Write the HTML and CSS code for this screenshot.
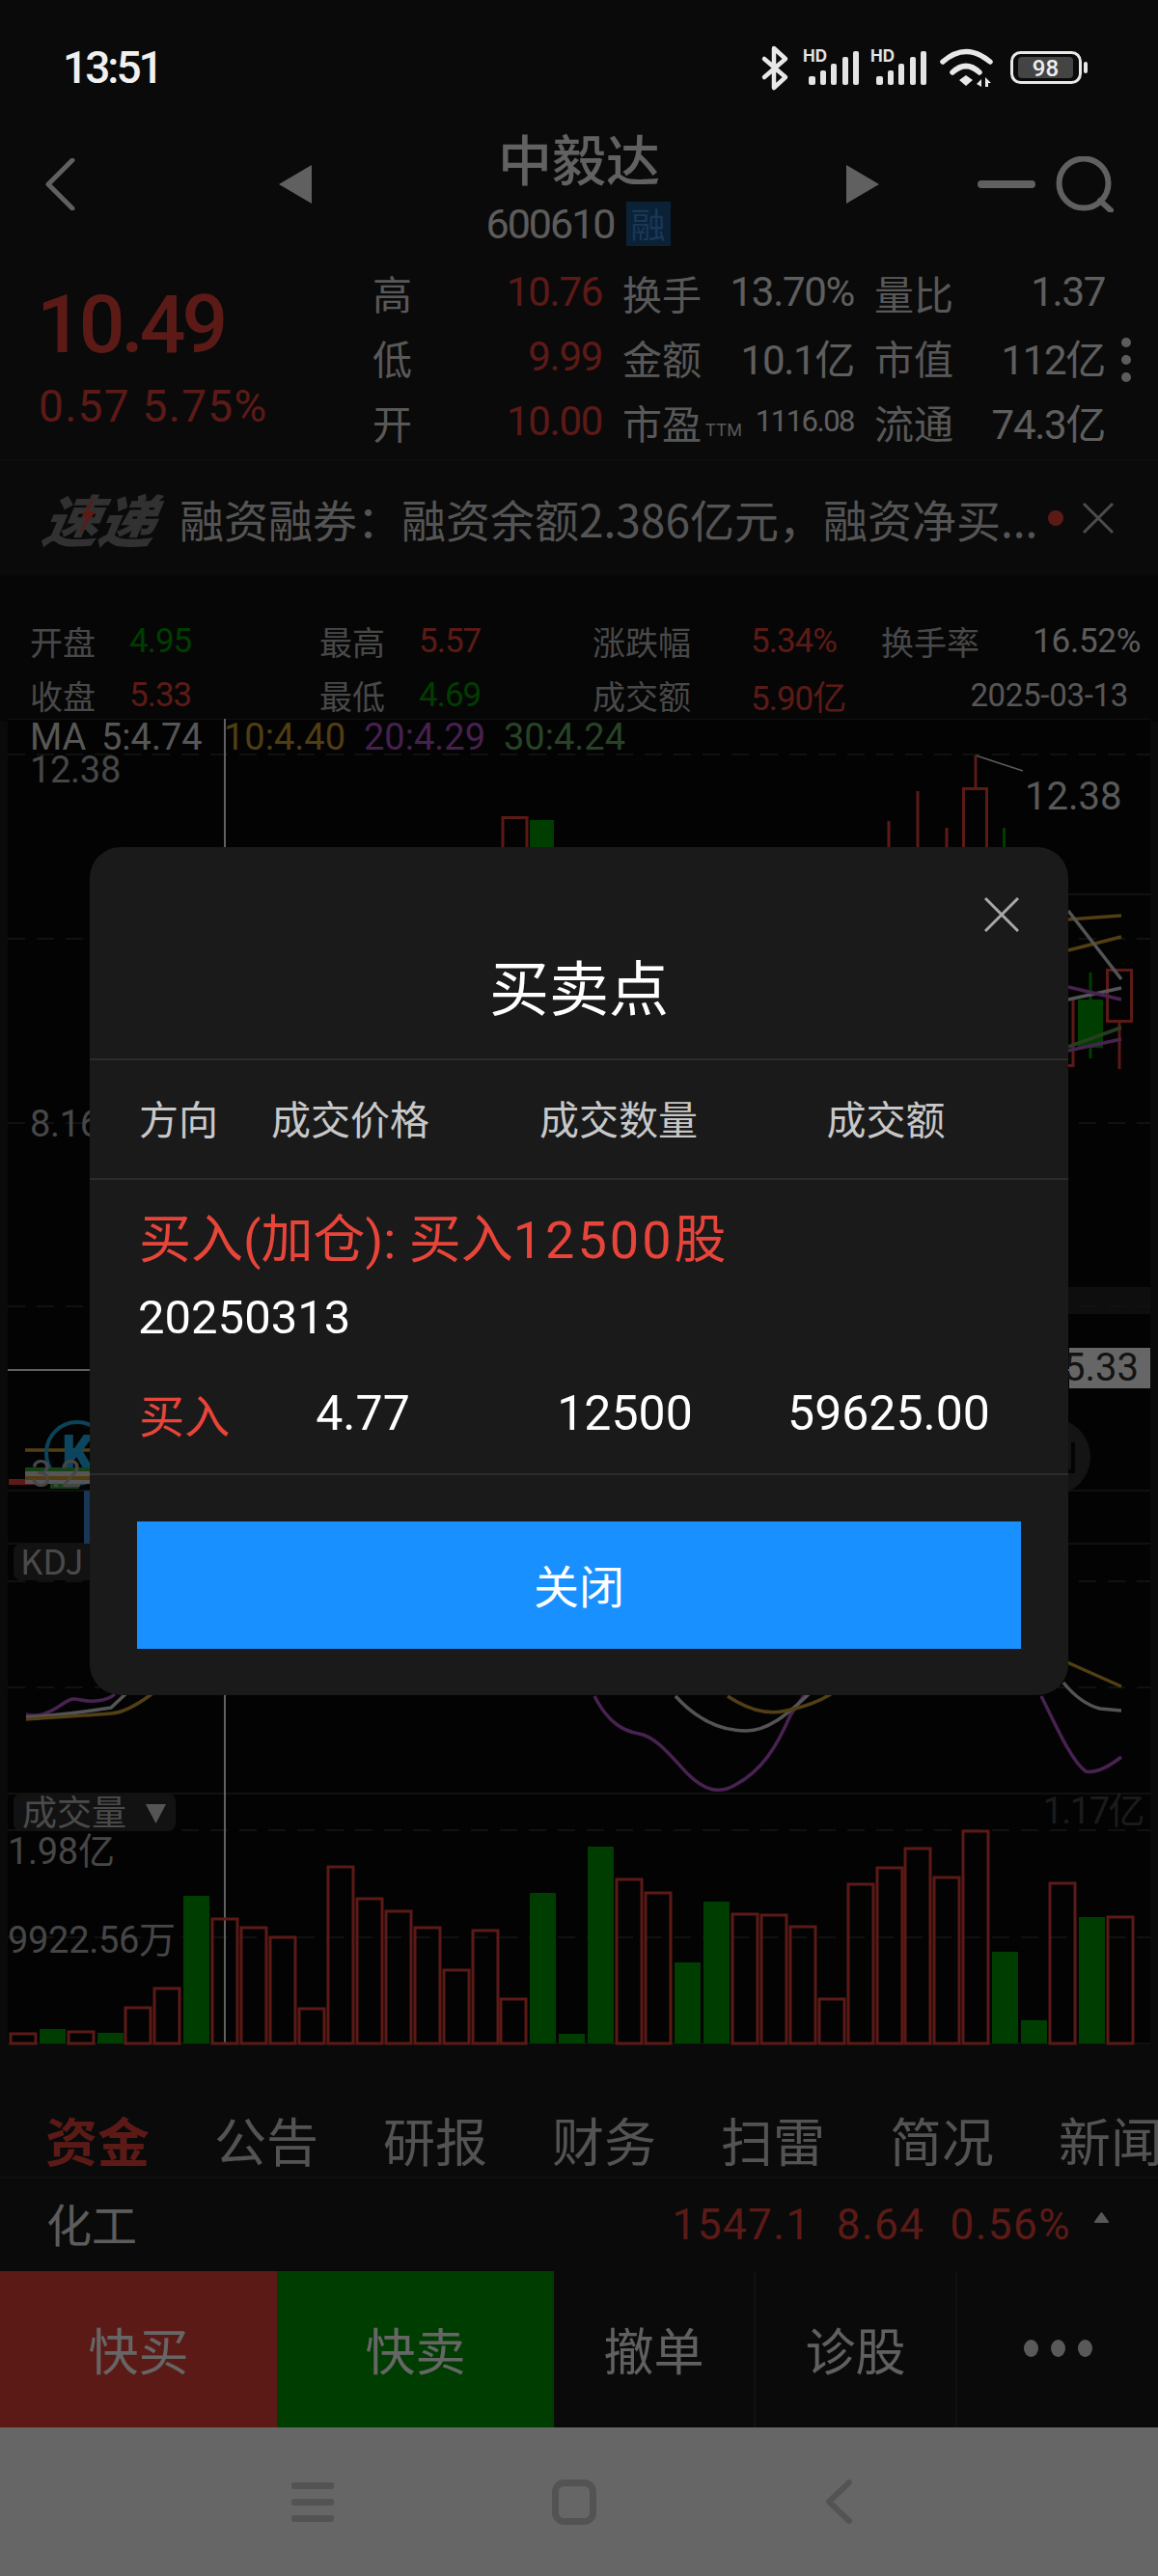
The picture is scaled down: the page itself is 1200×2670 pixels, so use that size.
FILE: index.html
```html
<!DOCTYPE html>
<html lang="zh-CN">
<head>
<meta charset="utf-8">
<title>中毅达 600610</title>
<link rel="stylesheet" href="styles.css">
</head>
<body>
<div class="page">
  <div class="status">
    <span class="clock">13:51</span>
    <div class="status-icons">
      <svg class="i-bt" viewBox="0 0 28 45"><path d="M3 13 25 32 13 43V2L25 13 3 32"/></svg>
      <svg class="i-sig" viewBox="0 0 58 36"><text class="sig-hd" x="0" y="12">HD</text><rect x="6" y="27" width="7" height="9" rx="2"/><rect x="18" y="21" width="6" height="15" rx="2"/><rect x="29" y="14" width="6" height="22" rx="2"/><rect x="41" y="7" width="6" height="29" rx="2"/><rect x="52" y="1" width="6" height="35" rx="2"/></svg>
      <svg class="i-sig" viewBox="0 0 58 36"><text class="sig-hd" x="0" y="12">HD</text><rect x="6" y="27" width="7" height="9" rx="2"/><rect x="18" y="21" width="6" height="15" rx="2"/><rect x="29" y="14" width="6" height="22" rx="2"/><rect x="41" y="7" width="6" height="29" rx="2"/><rect x="52" y="1" width="6" height="35" rx="2"/></svg>
      <svg class="i-wifi" viewBox="0 0 53 40"><path class="arc" d="M2 14Q26-7 51 14M12 25Q26 12 40 25"/><path class="fill" d="M19 33 26 28 33 33 26 39ZM37 37l5-5v8zM46 30l6 6h-3v4h-3z"/></svg>
      <svg class="i-bat" viewBox="0 0 80 34"><rect class="bat-box" x="1.5" y="1.5" width="71" height="31" rx="9"/><rect class="bat-fill" x="8" y="6" width="57" height="22" rx="4"/><text class="bat-num" x="36.5" y="26">98</text><rect class="bat-nub" x="76" y="11" width="4" height="12" rx="2"/></svg>
    </div>
  </div>

  <header class="head">
    <div class="head-side">
      <svg class="i-back" viewBox="0 0 32 54"><path d="M29 2 4 27 29 52"/></svg>
      <svg class="i-tri" viewBox="0 0 34 40"><path d="M34 0V40L0 20Z"/></svg>
    </div>
    <div class="head-mid">
      <div class="title">中毅达</div>
      <div class="sub"><span class="code">600610</span><span class="tag-rong">融</span></div>
    </div>
    <div class="head-side head-side-r">
      <svg class="i-tri" viewBox="0 0 34 40"><path d="M0 0V40L34 20Z"/></svg>
      <svg class="i-min" viewBox="0 0 60 8"><rect width="60" height="8" rx="4"/></svg>
      <svg class="i-search" viewBox="0 0 60 58"><circle cx="29" cy="28" r="25.5"/><path d="M46 46 57 56"/></svg>
    </div>
  </header>

  <section class="quote">
    <div class="price">
      <div class="price-now">10.49</div>
      <div class="price-chg">0.57 5.75%</div>
    </div>
    <div class="stats">
      <div class="stat"><span class="k">高</span><span class="v up">10.76</span></div>
      <div class="stat"><span class="k">换手</span><span class="v">13.70%</span></div>
      <div class="stat"><span class="k">量比</span><span class="v">1.37</span></div>
      <div class="stat"><span class="k">低</span><span class="v up">9.99</span></div>
      <div class="stat"><span class="k">金额</span><span class="v">10.1亿</span></div>
      <div class="stat"><span class="k">市值</span><span class="v">112亿</span></div>
      <div class="stat"><span class="k">开</span><span class="v up">10.00</span></div>
      <div class="stat"><span class="k">市盈<small class="ttm">TTM</small></span><span class="v v-sm">1116.08</span></div>
      <div class="stat"><span class="k">流通</span><span class="v">74.3亿</span></div>
    </div>
    <div class="kebab"><i></i><i></i><i></i></div>
  </section>

  <section class="news">
    <div class="news-logo">速递<svg class="bolt" viewBox="0 0 20 46"><path d="M14 0 4 25h6L3 46 18 18h-7z"/></svg></div>
    <div class="news-text">融资融券：融资余额2.386亿元，融资净买...</div>
    <i class="news-dot"></i>
    <svg class="news-x" viewBox="0 0 34 34"><path d="M2 2 32 32M32 2 2 32"/></svg>
  </section>

  <section class="info">
    <span class="ik">开盘</span><span class="iv dn">4.95</span>
    <span class="ik">最高</span><span class="iv up">5.57</span>
    <span class="ik">涨跌幅</span><span class="iv up">5.34%</span>
    <span class="i-last"><span class="ik">换手率</span><span class="iv">16.52%</span></span>
    <span class="ik">收盘</span><span class="iv up">5.33</span>
    <span class="ik">最低</span><span class="iv dn">4.69</span>
    <span class="ik">成交额</span><span class="iv up">5.90亿</span>
    <span class="i-date iv">2025-03-13</span>
  </section>

  <svg class="chart" viewBox="0 745 1200 1435" width="1200" height="1435">
    <rect class="c-bg" x="8" y="745" width="1184" height="1373"/>
    <rect class="c-band" x="1107" y="1334" width="85" height="28"/>
    <path class="c-line" d="M8 745H1192M1107 927H1192M8 1545H1192M8 1600H1192M8 1859H1192M8 2118H1192"/>
    <path class="c-dash" d="M8 782H1192M8 973H1192M8 1164H1192M8 1354H1192M8 1639H1192M8 1749H1192M8 1897H1192M8 2008H1192"/>
    <text class="c-ma c-w" x="31" y="777">MA</text>
    <text class="c-ma c-w" x="105" y="777">5:4.74</text>
    <text class="c-ma c-gold" x="232" y="777">10:4.40</text>
    <text class="c-ma c-pur" x="377" y="777">20:4.29</text>
    <text class="c-ma c-grn" x="522" y="777">30:4.24</text>
    <text class="c-ax" x="31" y="811">12.38</text>
    <text class="c-ax" x="31" y="1178">8.16</text>
    <text class="c-hi" x="1062" y="839">12.38</text>
    <path class="c-thin" d="M1011 783 1060 799"/>
    <path class="c-cross" d="M233 745V2118M8 1420H1192"/>

    <g class="c-candle">
      <path d="M521 880V847.500H546V880M921 851V880M951 820V880M981 858V880M1011 783V816M998.500 880V817.500H1022.500V880"/>
      <rect x="1147.500" y="1005.500" width="25" height="53"/>
      <path d="M1160 1059V1108M1112 1034V1104.500H1107"/>
    </g>
    <g class="c-solid">
      <rect x="549" y="850" width="25" height="30"/>
      <rect x="1039" y="858" width="3" height="22"/>
      <rect x="1117" y="1036" width="26" height="50"/>
      <rect x="1128.500" y="1008" width="3" height="89"/>
    </g>
    <path class="c-l c-s-gold" d="M1107 953 1162 949M1107 985 1162 971"/>
    <path class="c-l c-s-gray" d="M1107 944 1162 1015M1107 1036 1162 1024"/>
    <path class="c-l c-s-pur" d="M1107 1023 1162 1036M1107 1089 1162 1077"/>
    <path class="c-l c-s-grn" d="M1107 1085 1162 1065"/>

    <rect class="c-tag" x="1108" y="1397" width="84" height="42"/>
    <text class="c-tag-t" x="1180" y="1431">5.33</text>

    <circle class="c-round" cx="1090" cy="1510" r="40"/>
    <path class="c-round-a" d="M1112 1495V1525H1100"/>
    <path class="c-l c-s-gold" d="M26 1503H93"/>
    <circle class="c-k" cx="80" cy="1506" r="32"/>
    <text class="c-k-t" x="64" y="1524">K</text>
    <rect class="c-blk-r" x="9" y="1533" width="30" height="6"/>
    <rect class="c-blk-g" x="26" y="1521" width="67" height="4"/>
    <rect class="c-blk-w" x="26" y="1525" width="67" height="6"/>
    <rect class="c-blk-y" x="26" y="1530" width="67" height="4"/>
    <rect class="c-blk-w" x="26" y="1534" width="67" height="4"/>
    <rect class="c-blk-g" x="52" y="1538" width="30" height="5"/>
    <text class="c-ax" x="32" y="1541">3.2</text>
    <rect class="c-blue" x="87" y="1545" width="6" height="55"/>
    <rect class="c-lab" x="14" y="1600" width="90" height="38" rx="8"/>
    <text class="c-lab-t" x="21" y="1632">KDJ</text>

    <path class="c-c c-s-pur" d="M27 1777C40 1780 50 1776 62 1768S75 1760 84 1762 110 1764 119 1756M616 1758C630 1785 645 1794 662 1797 680 1800 695 1820 712 1838 730 1856 745 1860 762 1850 790 1835 805 1810 819 1778L834 1756M1079 1758C1095 1790 1110 1825 1125 1836 1135 1838 1148 1832 1162 1821"/>
    <path class="c-c c-s-gray" d="M27 1780C60 1778 90 1774 115 1770L130 1756M700 1758C720 1780 745 1794 773 1794 795 1794 815 1778 838 1756M1102 1744C1115 1760 1128 1768 1140 1771L1162 1773"/>
    <path class="c-c c-s-gold" d="M27 1782C55 1780 90 1778 115 1776 130 1775 145 1765 157 1756M754 1758C775 1772 795 1778 815 1773 830 1770 848 1764 861 1756M1106 1723 1162 1748"/>

    <rect class="c-lab" x="14" y="1859" width="168" height="39" rx="8"/>
    <text class="c-lab-t" x="23" y="1892">成交量</text>
    <path class="c-lab-a" d="M151 1870H172L161.500 1890Z"/>
    <text class="c-dim" x="1185" y="1890">1.17亿</text>
    <text class="c-ax" x="8" y="1932">1.98亿</text>
    <text class="c-ax" x="8" y="2024">9922.56万</text>

    <g class="c-candle">
      <rect x="11" y="2108" width="26" height="10"/><rect x="71" y="2106" width="26" height="12"/>
      <rect x="130" y="2081" width="26" height="37"/><rect x="160" y="2061" width="26" height="57"/>
      <rect x="220" y="1989" width="26" height="129"/><rect x="250" y="1998" width="26" height="120"/>
      <rect x="280" y="2008" width="26" height="110"/><rect x="310" y="2082" width="26" height="36"/>
      <rect x="340" y="1935" width="26" height="183"/><rect x="370" y="1968" width="26" height="150"/>
      <rect x="400" y="1981" width="26" height="137"/><rect x="430" y="1998" width="26" height="120"/>
      <rect x="460" y="2042" width="26" height="76"/><rect x="490" y="2001" width="26" height="117"/>
      <rect x="519" y="2072" width="26" height="46"/><rect x="639" y="1948" width="26" height="170"/>
      <rect x="669" y="1962" width="26" height="156"/><rect x="759" y="1984" width="26" height="134"/>
      <rect x="789" y="1985" width="26" height="133"/><rect x="819" y="1997" width="26" height="121"/>
      <rect x="849" y="2072" width="26" height="46"/><rect x="879" y="1953" width="26" height="165"/>
      <rect x="909" y="1936" width="26" height="182"/><rect x="938" y="1916" width="26" height="202"/>
      <rect x="968" y="1946" width="26" height="172"/><rect x="998" y="1898" width="26" height="220"/>
      <rect x="1088" y="1952" width="26" height="166"/><rect x="1148" y="1987" width="26" height="131"/>
    </g>
    <g class="c-solid">
      <rect x="41" y="2103" width="27" height="15"/><rect x="101" y="2107" width="27" height="11"/>
      <rect x="190" y="1965" width="27" height="153"/><rect x="549" y="1962" width="27" height="156"/>
      <rect x="579" y="2108" width="27" height="10"/><rect x="609" y="1914" width="27" height="204"/>
      <rect x="699" y="2034" width="27" height="84"/><rect x="729" y="1971" width="27" height="147"/>
      <rect x="1028" y="2023" width="27" height="95"/><rect x="1058" y="2094" width="27" height="24"/>
      <rect x="1118" y="1987" width="27" height="131"/>
    </g>
  </svg>

  <nav class="tabs">
    <span class="tab tab-on">资金</span><span class="tab">公告</span><span class="tab">研报</span><span class="tab">财务</span><span class="tab">扫雷</span><span class="tab">简况</span><span class="tab">新闻</span>
  </nav>

  <div class="sector">
    <span class="sector-name">化工</span>
    <span class="sector-val">1547.1</span><span class="sector-val">8.64</span><span class="sector-val">0.56%</span>
    <svg class="sector-tri" viewBox="0 0 17 12"><path d="M8.500 1 15 10H2Z"/></svg>
  </div>

  <div class="actions">
    <div class="act act-buy">快买</div>
    <div class="act act-sell">快卖</div>
    <div class="act act-sm">撤单</div>
    <div class="act act-sm">诊股</div>
    <div class="act act-more"><i></i><i></i><i></i></div>
  </div>

  <div class="navbar">
    <svg class="n-menu" viewBox="0 0 44 41"><path d="M3 3.500H41M3 20.500H41M3 37.500H41"/></svg>
    <svg class="n-home" viewBox="0 0 46 47"><rect x="3.500" y="3.500" width="39" height="40" rx="9"/></svg>
    <svg class="n-back" viewBox="0 0 28 46"><path d="M25 3 4 23 25 43"/></svg>
  </div>

  <div class="scrim">
    <div class="modal">
      <svg class="modal-x" viewBox="0 0 36 36"><path d="M1 1 35 35M35 1 1 35"/></svg>
      <h2 class="modal-title">买卖点</h2>
      <div class="m-row m-head"><span class="m-first">方向</span><span>成交价格</span><span>成交数量</span><span>成交额</span></div>
      <div class="m-body">
        <div class="m-sig">买入(加仓): 买入<span class="m-qty">12500</span>股</div>
        <div class="m-date">20250313</div>
        <div class="m-row m-vals"><span class="m-first m-red">买入</span><span>4.77</span><span>12500</span><span>59625.00</span></div>
      </div>
      <div class="m-foot"><button class="m-btn" type="button">关闭</button></div>
    </div>
  </div>
</div>
</body>
</html>
```

FILE: styles.css
```css
* { box-sizing: border-box; }
html, body { margin: 0; padding: 0; background: #191919; }
body { font-family: Roboto, "Noto Sans CJK SC", sans-serif; }
.page {
  --din: Roboto, "Noto Sans CJK SC", sans-serif;
  --up: #e6423a;
  --dn: #009a00;
  position: relative;
  width: 1200px;
  height: 2670px;
  display: flex;
  flex-direction: column;
  overflow: hidden;
  color: #e6e6e6;
  background: #191919;
  font-family: "Noto Sans CJK SC", sans-serif;
}

/* status bar sits above the scrim */
.status {
  position: relative;
  z-index: 3;
  flex: 0 0 120px;
  padding: 20px 73px 0 65px;
  display: flex;
  align-items: center;
  justify-content: space-between;
  background: #0a0a0a;
}
.clock { font: 500 46px Roboto, sans-serif; color: #f0f0f0; letter-spacing: -3px; }
.status-icons { display: flex; align-items: center; gap: 12px; }
.status-icons svg { display: block; overflow: visible; }
.i-bt { width: 28px; height: 45px; fill: none; stroke: #e8e8e8; stroke-width: 4.5; stroke-linejoin: round; stroke-linecap: round; }
.i-sig { width: 58px; height: 36px; fill: #e4e4e4; margin-left: 0; }
.i-bt + .i-sig { margin-left: 3px; }
.sig-hd { font: 700 17px Inter, sans-serif; fill: #e4e4e4; }
.i-wifi { width: 53px; height: 40px; margin-left: 3px; }
.i-wifi .arc { fill: none; stroke: #e8e8e8; stroke-width: 5.5; stroke-linecap: round; }
.i-wifi .fill { fill: #e8e8e8; }
.i-bat { width: 80px; height: 34px; margin-left: 7px; }
.bat-box { fill: none; stroke: #e8e8e8; stroke-width: 3; }
.bat-fill { fill: #444; }
.bat-num { font: 500 24px Roboto, sans-serif; fill: #eee; text-anchor: middle; }
.bat-nub { fill: #e8e8e8; }

/* header */
.head { flex: 0 0 150px; display: flex; align-items: flex-start; color: #eee; }
.head-side {
  flex: 0 0 323px;
  height: 142px;
  padding-left: 46px;
  display: flex;
  align-items: center;
  justify-content: space-between;
}
.head-side-r { padding: 0 46px 0 0; }
.i-back { width: 32px; height: 54px; fill: none; stroke: #f0f0f0; stroke-width: 5; stroke-linecap: round; stroke-linejoin: round; }
.i-tri { width: 34px; height: 40px; fill: #f0f0f0; }
.i-min { width: 60px; height: 8px; fill: #f0f0f0; margin-left: 80px; }
.i-search { width: 60px; height: 58px; fill: none; stroke: #f0f0f0; stroke-width: 6; stroke-linecap: round; }
.head-mid { flex: 1; padding-top: 8px; display: flex; flex-direction: column; align-items: center; }
.title { font-size: 56px; line-height: 70px; font-weight: 500; color: #f2f2f2; }
.sub { display: flex; align-items: center; margin-top: 11px; height: 46px; gap: 12px; padding-right: 2px; }
.code { font-family: var(--din); font-size: 43px; letter-spacing: -2px; color: #e6e6e6; }
.tag-rong { width: 46px; height: 46px; line-height: 44px; text-align: center; background: #1b5388; color: #3f8bd6; font-size: 36px; }

/* quote */
.quote { flex: 0 0 208px; display: flex; border-bottom: 2px solid #222; }
.price { flex: 0 0 386px; padding-left: 38px; }
.price-now { font: 500 84px/90px var(--din); color: var(--up); height: 90px; margin-top: 22px; letter-spacing: -4px; }
.price-chg { font: 400 46px/60px var(--din); color: var(--up); margin: 9px 0 0 2px; letter-spacing: 1.3px; }
.stats { display: grid; grid-template-columns: 238px 240px 239px; grid-auto-rows: 67px; column-gap: 21px; margin-top: -1px; align-content: start; }
.stat { display: flex; align-items: center; justify-content: space-between; }
.k { font-size: 41px; color: #dcdcdc; display: flex; align-items: flex-end; white-space: nowrap; }
.ttm { font: 400 18px/22px var(--din); margin: 0 0 10px 4px; letter-spacing: .3px; }
.v { font: 400 42px var(--din); letter-spacing: -1.3px; color: #eaeaea; white-space: nowrap; }
.v-sm { font-size: 31px; letter-spacing: -1.5px; }
.up { color: var(--up); }
.dn { color: var(--dn); }
.kebab { margin: 80px 0 0 17px; display: flex; flex-direction: column; gap: 8px; }
.kebab i { width: 10px; height: 10px; border-radius: 50%; background: #e6e6e6; }

/* news */
.news { flex: 0 0 119px; padding: 0 46px; display: flex; align-items: center; border-bottom: 2px solid #161616; }
.news-logo { position: relative; flex: 0 0 119px; font-size: 58px; line-height: 66px; font-weight: 900; font-style: italic; color: #7c7c7c; transform: skewX(-10deg); white-space: nowrap; }
.bolt { position: absolute; left: 34px; top: 8px; width: 20px; height: 46px; fill: var(--up); }
.news-text { flex: 0 0 auto; width: 885px; margin-left: 21px; font-size: 46px; white-space: nowrap; color: #d2d2d2; }
.news-dot { flex: 0 0 16px; height: 16px; margin-left: 15px; border-radius: 50%; background: var(--up); }
.news-x { flex: 0 0 34px; height: 34px; margin-left: 19px; fill: none; stroke: #bdbdbd; stroke-width: 3; }

/* OHLC info */
.info {
  flex: 0 0 148px;
  padding: 39px 0 0 31px;
  display: grid;
  grid-template-columns: 103px 197px 103px 180px 164px 135px 269px;
  grid-template-rows: 56px 56px;
  align-items: center;
  background: #0f0f0f;
}
.ik { font-size: 34px; color: #b4b4b4; white-space: nowrap; }
.iv { font: 400 35px var(--din); letter-spacing: -1px; white-space: nowrap; }
.i-last { display: flex; align-items: center; justify-content: space-between; }
.i-date { justify-self: end; margin-right: 13px; font-size: 33px; color: #d8d8d8; letter-spacing: -.3px; }
.i-last .iv { color: #e6e6e6; letter-spacing: -.3px; }

/* chart canvas */
.chart { flex: 0 0 1435px; display: block; margin-top: -3px; }
.c-bg { fill: #080808; }
.c-band { fill: #242424; }
.c-line { stroke: #2a2a2a; stroke-width: 2; fill: none; }
.c-dash { stroke: #2c2c2c; stroke-width: 2; fill: none; stroke-dasharray: 18 12; }
.c-ma { font: 400 38px var(--din); }
.c-w { fill: #d8d8d8; }
.c-gold { fill: #c99a2e; }
.c-pur { fill: #b052c4; }
.c-grn { fill: #63a85f; }
.c-ax { font: 400 38px var(--din); fill: #b0b0b0; letter-spacing: -.3px; }
.c-hi { font: 400 40px Roboto, sans-serif; fill: #dedede; }
.c-thin { stroke: #e0e0e0; stroke-width: 1.5; fill: none; }
.c-cross { stroke: #f0f0f0; stroke-width: 2; fill: none; }
.c-candle { fill: none; stroke: var(--up); stroke-width: 3; }
.c-solid { fill: var(--dn); }
.c-l { fill: none; stroke-width: 3.5; }
.c-c { fill: none; stroke-width: 3.5; }
.c-s-gold { stroke: #cc9e30; }
.c-s-gray { stroke: #d2d2d2; }
.c-s-pur { stroke: #b356c8; }
.c-s-grn { stroke: #5f9a55; }
.c-tag { fill: #fff; }
.c-tag-t { font: 400 40px var(--din); fill: #303030; text-anchor: end; }
.c-round { fill: #333; }
.c-round-a { fill: none; stroke: #0a0a0a; stroke-width: 4; }
.c-k { fill: none; stroke: #1fa6e0; stroke-width: 4; }
.c-k-t { font: 900 52px Roboto, sans-serif; fill: #1fb0ea; }
.c-blk-r { fill: var(--up); }
.c-blk-g { fill: #3aa03a; }
.c-blk-w { fill: #d8d8d8; }
.c-blk-y { fill: #c99a2e; }
.c-blue { fill: #3b8ad8; }
.c-lab { fill: #2e2e2e; }
.c-lab-t { font: 400 36px "Noto Sans CJK SC", sans-serif; fill: #b8b8b8; }
.c-lab-a { fill: #d4d4d4; }
.c-dim { font: 400 38px var(--din); fill: #444; text-anchor: end; letter-spacing: -1.5px; }

/* tabs */
.tabs { flex: 0 0 78px; padding-left: 47px; display: flex; gap: 67px; white-space: nowrap; border-bottom: 2px solid #242424; align-items: center; }
.tab { flex: 0 0 108px; font-size: 54px; line-height: 76px; color: #cfcfcf; }
.tab-on { color: var(--up); font-weight: 700; }

/* sector */
.sector { flex: 0 0 96px; padding: 0 50px 0 48px; display: flex; align-items: center; gap: 26px; }
.sector-name { font-size: 47px; color: #e6e6e6; margin: -6px auto 0 0; }
.sector-val { font: 400 44px var(--din); color: var(--up); letter-spacing: 1.5px; }
.sector-tri { width: 17px; height: 12px; margin-left: -3px; margin-top: -14px; fill: #dcdcdc; stroke: #dcdcdc; stroke-width: 2; stroke-linejoin: round; }

/* action bar */
.actions { flex: 0 0 162px; display: flex; }
.act { display: flex; align-items: center; justify-content: center; font-size: 52px; color: #fff; padding-bottom: 2px; }
.act-buy { flex: 0 0 287px; background: #e6423a; }
.act-sell { flex: 0 0 287px; background: #009a00; }
.act-sm { flex: 0 0 209px; border-right: 2px solid #2a2a2a; color: #f0f0f0; }
.act-more { flex: 1; gap: 13px; }
.act-more i { width: 15px; height: 18px; border-radius: 50%; background: #dedede; }

/* gesture bar */
.navbar { flex: 1; background: #fff; display: flex; align-items: center; padding-left: 302px; }
.navbar svg { fill: none; stroke: #d0d0d0; stroke-linecap: round; stroke-linejoin: round; }
.n-menu { width: 44px; height: 41px; stroke-width: 7; }
.n-home { width: 46px; height: 47px; stroke-width: 7; margin-left: 226px; }
.n-back { width: 28px; height: 46px; stroke-width: 6; margin-left: 237px; }

/* dialog */
.scrim {
  position: absolute;
  inset: 0;
  z-index: 2;
  padding-top: 878px;
  display: flex;
  justify-content: center;
  align-items: flex-start;
  background: rgba(0, 0, 0, .6);
}
.modal { position: relative; width: 1014px; height: 879px; border-radius: 32px; background: #1a1a1a; color: #fff; font-family: Roboto, "Noto Sans CJK SC", sans-serif; }
.modal-x { position: absolute; right: 51px; top: 52px; width: 36px; height: 36px; fill: none; stroke: #a8a8a8; stroke-width: 3; }
.modal-title { margin: 0; padding: 114px 0 35px; font-size: 62px; line-height: 70px; font-weight: 400; text-align: center; border-bottom: 2px solid #2c2c2c; }
.m-row { display: grid; align-items: center; text-align: center; padding-left: 51px; white-space: nowrap; }
.m-first { text-align: left; }
.m-head { height: 124px; grid-template-columns: 78px 282px 274px 280px; font-size: 41px; color: #c8c8c8; border-bottom: 2px solid #2c2c2c; padding-bottom: 4px; }
.m-body { padding: 33px 51px 37px; border-bottom: 2px solid #2c2c2c; }
.m-sig { font-size: 54px; line-height: 60px; color: #e8453a; white-space: nowrap; }
.m-qty { letter-spacing: 3px; }
.m-date { margin-top: 20px; font-size: 49px; line-height: 60px; margin-left: -1px; }
.m-vals { margin-top: 34px; padding-left: 0; height: 60px; grid-template-columns: 96px 272px 271px 276px; font-size: 50px; }
.m-red { color: #e8453a; font-size: 47px; }
.m-foot { padding: 48px 49px; }
.m-btn { display: block; width: 100%; height: 132px; border: 0; border-radius: 0; padding: 0 0 4px; background: #1890ff; color: #fff; font: 400 47px "Noto Sans CJK SC", sans-serif; }
```
